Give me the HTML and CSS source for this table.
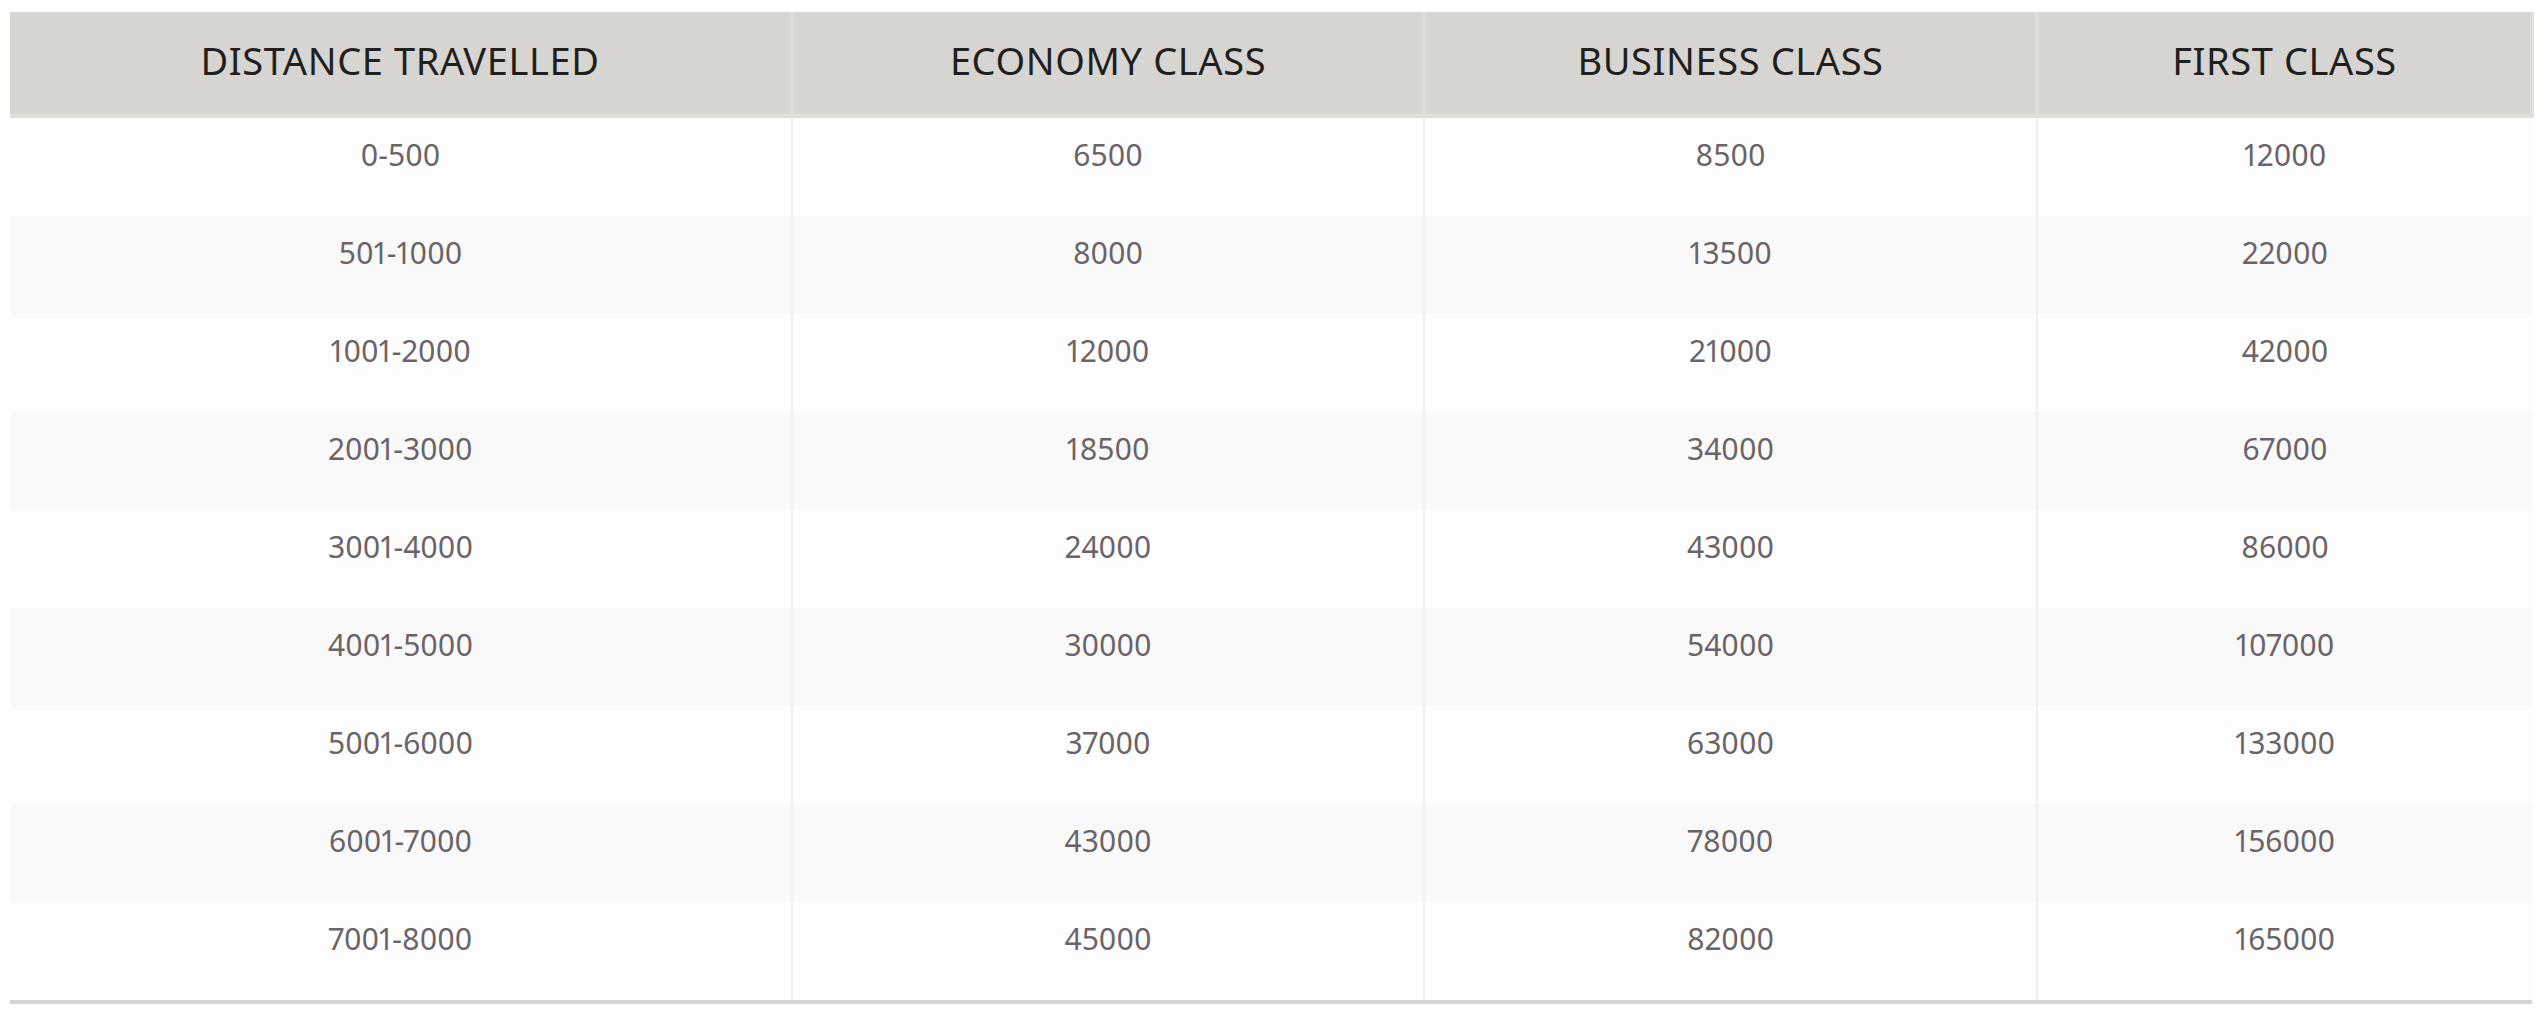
FILE: index.html
```html
<!DOCTYPE html>
<html lang="en">
<head>
<meta charset="utf-8">
<title>Fares</title>
<link rel="stylesheet" href="styles.css">
</head>
<body>
<div class="fare-table">
  <div class="head-row">
    <div class="th">DISTANCE TRAVELLED</div>
    <div class="th">ECONOMY CLASS</div>
    <div class="th">BUSINESS CLASS</div>
    <div class="th">FIRST CLASS</div>
  </div>
  <div class="body">
    <div class="row"><div class="td">0-500</div><div class="td">6500</div><div class="td">8500</div><div class="td">12000</div></div>
    <div class="row"><div class="td">501-1000</div><div class="td">8000</div><div class="td">13500</div><div class="td">22000</div></div>
    <div class="row"><div class="td">1001-2000</div><div class="td">12000</div><div class="td">21000</div><div class="td">42000</div></div>
    <div class="row"><div class="td">2001-3000</div><div class="td">18500</div><div class="td">34000</div><div class="td">67000</div></div>
    <div class="row"><div class="td">3001-4000</div><div class="td">24000</div><div class="td">43000</div><div class="td">86000</div></div>
    <div class="row"><div class="td">4001-5000</div><div class="td">30000</div><div class="td">54000</div><div class="td">107000</div></div>
    <div class="row"><div class="td">5001-6000</div><div class="td">37000</div><div class="td">63000</div><div class="td">133000</div></div>
    <div class="row"><div class="td">6001-7000</div><div class="td">43000</div><div class="td">78000</div><div class="td">156000</div></div>
    <div class="row"><div class="td">7001-8000</div><div class="td">45000</div><div class="td">82000</div><div class="td">165000</div></div>
  </div>
</div>
</body>
</html>
```
FILE: styles.css
```css
html, body {
  margin: 0;
  padding: 0;
  background: #ffffff;
}
body {
  padding: 12px 10px;
  font-family: "Noto Sans", "Open Sans", sans-serif;
}
.fare-table {
  width: 2524px;
}
.head-row {
  display: grid;
  grid-template-columns: 784px 632px 613px 495px;
}
.th {
  background: #d6d5d1;
  border-right: 4px solid #dfdedb;
  border-bottom: 4px solid #dfdedb;
  color: #1f1f1f;
  font-size: 38px;
  line-height: 54px;
  padding: 21px 0 27px;
  text-align: center;
  letter-spacing: 0.6px;
}
.body {
  width: 2522px;
  border-bottom: 4px solid #d5d4d0;
}
.row {
  display: grid;
  grid-template-columns: 783px 632px 613px 494px;
  height: 98px;
  background: #fdfdfd;
}
.row:nth-child(even) {
  background: #f9f9f9;
}
.td {
  border-right: 2px solid #f0f0f0;
  color: #6a6468;
  font-size: 30px;
  line-height: 45px;
  padding-top: 14px;
  text-align: center;
  font-variant-numeric: proportional-nums;
}
.td:last-child {
  border-right: none;
}
```
